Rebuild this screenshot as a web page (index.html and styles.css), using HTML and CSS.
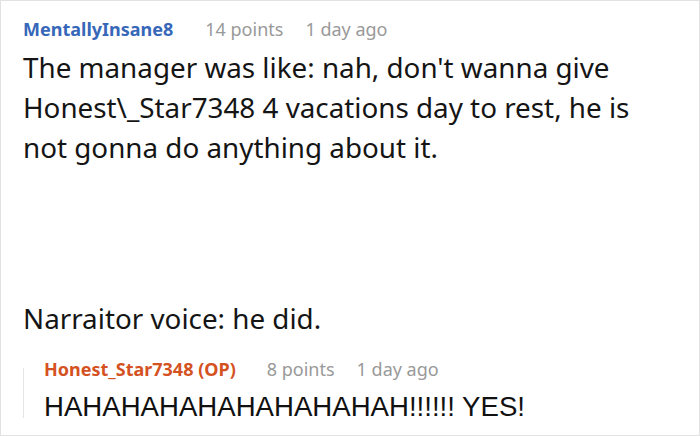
FILE: index.html
```html
<!DOCTYPE html>
<html>
<head>
<meta charset="utf-8">
<link rel="stylesheet" href="styles.css">
</head>
<body>
<div class="frame">
  <div class="comment">
    <div class="meta">
      <span class="author">MentallyInsane8</span>
      <span class="info">14 points</span>
      <span class="info">1 day ago</span>
    </div>
    <div class="body">
      <p>The manager was like: nah, don't wanna give Honest\_Star7348 4 vacations day to rest, he is not gonna do anything about it.</p>
      <p class="gap">Narraitor voice: he did.</p>
    </div>
    <div class="reply">
      <div class="meta">
        <span class="author op">Honest_Star7348 (OP)</span>
        <span class="info">8 points</span>
        <span class="info">1 day ago</span>
      </div>
      <div class="reply-body">HAHAHAHAHAHAHAHAHAH!!!!!! YES!</div>
    </div>
  </div>
</div>
</body>
</html>
```
FILE: styles.css
```css
html, body {
  margin: 0;
  padding: 0;
  background: #fff;
}
.frame {
  width: 700px;
  height: 436px;
  box-sizing: border-box;
  border: 1px solid #e2e2e2;
  overflow: hidden;
  font-family: "Noto Sans", "Open Sans", sans-serif;
}
.comment {
  padding: 15px 40px 0 22px;
}
.meta {
  display: flex;
  align-items: baseline;
  font-size: 18px;
  line-height: 26px;
}
.author {
  font-weight: bold;
  color: #3767b9;
  margin-right: 32px;
}
.author.op {
  color: #d4521f;
  margin-right: 31px;
}
.info {
  color: #999;
  margin-right: 22px;
}
.body {
  margin-top: 5px;
  font-size: 27.8px;
  line-height: 40px;
  color: #151515;
}
.body p {
  margin: 0;
}
.body p.gap {
  margin-top: 131px;
}
.reply {
  margin-top: 18px;
  padding-left: 21px;
  background: linear-gradient(#e4e4e4, #e4e4e4) no-repeat 0 12px / 1px 50px;
}
.reply-body {
  margin-top: 9px;
  font-family: "Liberation Sans", Arial, sans-serif;
  font-size: 27.6px;
  line-height: 32px;
  color: #111;
}
```
